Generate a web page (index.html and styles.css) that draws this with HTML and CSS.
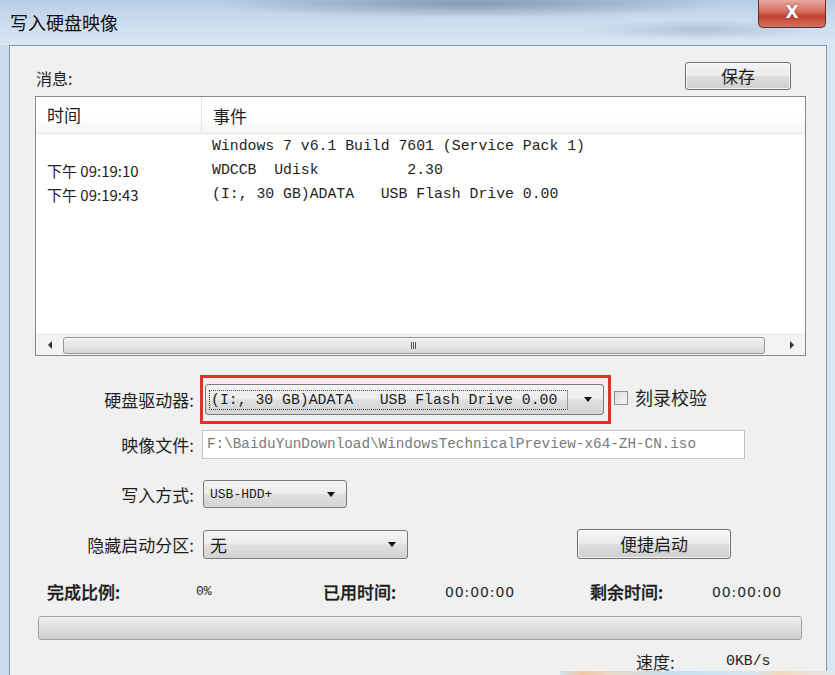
FILE: index.html
```html
<!DOCTYPE html>
<html lang="zh-CN">
<head>
    <meta charset="UTF-8">
    <title>写入硬盘映像</title>
    <link rel="stylesheet" href="styles.css">
</head>
<body>
    <div class="window">
        <div class="titlebar">
            <span class="title">写入硬盘映像</span>
            <span class="close">X</span>
        </div>

        <div class="client">
            <div class="msg-head">
                <span class="msg-label">消息:</span>
                <div class="btn btn-save">保存</div>
            </div>

            <div class="log">
                <div class="log-head">
                    <div class="col-time">时间</div>
                    <div class="col-event">事件</div>
                </div>
                <div class="log-body">
                    <div class="log-row"><div class="col-time"></div><div class="col-event mono">Windows 7 v6.1 Build 7601 (Service Pack 1)</div></div>
                    <div class="log-row"><div class="col-time">下午 09:19:10</div><div class="col-event mono">WDCCB  Udisk          2.30</div></div>
                    <div class="log-row"><div class="col-time">下午 09:19:43</div><div class="col-event mono">(I:, 30 GB)ADATA   USB Flash Drive 0.00</div></div>
                </div>
                <div class="hscroll">
                    <div class="arrow-btn"><span class="tri-left"></span></div>
                    <div class="thumb"><span class="grip"></span></div>
                    <div class="arrow-btn"><span class="tri-right"></span></div>
                </div>
            </div>

            <div class="form">
                <div class="row row-drive">
                    <div class="label">硬盘驱动器:</div>
                    <div class="field">
                        <div class="hilite">
                            <div class="combo combo-drive">
                                <span class="focus mono">(I:, 30 GB)ADATA   USB Flash Drive 0.00</span>
                                <span class="caret"></span>
                            </div>
                        </div>
                        <span class="check"></span>
                        <span class="check-label">刻录校验</span>
                    </div>
                </div>
                <div class="row row-image">
                    <div class="label">映像文件:</div>
                    <div class="field">
                        <div class="textbox mono">F:\BaiduYunDownload\WindowsTechnicalPreview-x64-ZH-CN.iso</div>
                    </div>
                </div>
                <div class="row row-mode">
                    <div class="label">写入方式:</div>
                    <div class="field">
                        <div class="combo combo-mode">
                            <span class="mono small">USB-HDD+</span>
                            <span class="caret"></span>
                        </div>
                    </div>
                </div>
                <div class="row row-hide">
                    <div class="label">隐藏启动分区:</div>
                    <div class="field">
                        <div class="combo combo-hide">
                            <span>无</span>
                            <span class="caret"></span>
                        </div>
                        <div class="btn btn-boot">便捷启动</div>
                    </div>
                </div>
            </div>

            <div class="stats">
                <span class="stat-label">完成比例:</span>
                <span class="mono small">0%</span>
                <span class="stat-label">已用时间:</span>
                <span class="clock">00:00:00</span>
                <span class="stat-label">剩余时间:</span>
                <span class="clock">00:00:00</span>
            </div>

            <div class="progress"></div>

            <div class="speed">
                <span class="speed-label">速度:</span>
                <span class="mono">0KB/s</span>
            </div>
        </div>
        <div class="taskbar-peek"></div>
    </div>
</body>
</html>
```

FILE: styles.css
```css
body {
    margin: 0;
    padding: 0;
    font-family: "Noto Sans CJK SC", sans-serif;
    color: #1e1e1e;
}
.window {
    position: relative;
    width: 835px;
    height: 675px;
    overflow: hidden;
    background: linear-gradient(90deg, #c9dbee 0%, #d8e6f4 100%);
}
.mono {
    font-family: "Liberation Mono", "Noto Sans CJK SC", monospace;
    font-size: 14.8px;
    white-space: pre;
}
.small {
    font-size: 13px;
}

/* title bar */
.titlebar {
    height: 45px;
    display: flex;
    align-items: flex-start;
    background:
        radial-gradient(ellipse 260px 14px at 470px 4px, rgba(70, 90, 115, 0.45), rgba(70, 90, 115, 0) 100%),
        radial-gradient(ellipse 120px 10px at 700px 30px, rgba(90, 110, 135, 0.25), rgba(90, 110, 135, 0) 100%),
        linear-gradient(180deg, #b7cde5 0%, #cadcef 45%, #d9e6f4 100%);
}
.title {
    padding: 9px 0 0 10px;
    font-size: 18px;
    color: #111;
}
.close {
    margin-left: auto;
    margin-right: 9px;
    width: 68px;
    height: 28px;
    box-sizing: border-box;
    border: 1px solid #6b2a24;
    border-top: none;
    border-radius: 0 0 5px 5px;
    background: linear-gradient(180deg, #e9aaa2 0%, #d66a5c 45%, #c1402f 60%, #d3735f 100%);
    color: #fff;
    font-family: "DejaVu Sans", sans-serif;
    font-weight: bold;
    font-size: 17px;
    text-align: center;
    line-height: 24px;
    text-shadow: 0 0 2px #6b2a24;
}

/* client area */
.client {
    margin: 0 8px 0 9px;
    height: 640px;
    border: 1px solid #7f97b0;
    border-bottom: none;
    background: #f0f0f0;
    padding: 0 20px 0 25px;
}
.msg-head {
    height: 47px;
    display: flex;
    align-items: flex-start;
    justify-content: space-between;
}
.msg-label {
    margin: 20px 0 0 1px;
    font-size: 16px;
}
.btn {
    box-sizing: border-box;
    border: 1px solid #707070;
    border-radius: 3px;
    background: linear-gradient(180deg, #f4f4f4 0%, #ebebeb 48%, #dddddd 52%, #cfcfcf 100%);
    box-shadow: inset 0 0 0 1px rgba(255, 255, 255, 0.7);
    text-align: center;
    font-size: 17px;
}
.btn-save {
    margin: 16px 15px 0 0;
    width: 106px;
    height: 28px;
    line-height: 25px;
}

/* log list */
.log {
    margin-top: 3px;
    height: 260px;
    box-sizing: border-box;
    border: 1px solid #828790;
    background: #fff;
    display: flex;
    flex-direction: column;
}
.log-head {
    height: 36px;
    display: flex;
    align-items: center;
    background: linear-gradient(180deg, #ffffff 0%, #ffffff 55%, #f3f4f6 100%);
    border-bottom: 1px solid #e3e4e6;
    font-size: 17px;
}
.log-head .col-time {
    border-right: 1px solid #e3e4e6;
    height: 36px;
    line-height: 36px;
}
.col-time {
    width: 154px;
    padding-left: 11px;
    flex: none;
}
.col-event {
    padding-left: 11px;
}
.log-body {
    flex: 1;
    padding-top: 0;
}
.log-row {
    height: 24px;
    display: flex;
    align-items: center;
    font-size: 15px;
}
.hscroll {
    height: 20px;
    display: flex;
    align-items: center;
    background: #f3f3f3;
    border-top: 1px solid #e8e8e8;
}
.arrow-btn {
    width: 27px;
    height: 20px;
    display: flex;
    align-items: center;
    justify-content: center;
}
.tri-left {
    border-right: 4px solid #333;
    border-top: 4px solid transparent;
    border-bottom: 4px solid transparent;
}
.tri-right {
    border-left: 4px solid #333;
    border-top: 4px solid transparent;
    border-bottom: 4px solid transparent;
}
.thumb {
    flex: 1;
    height: 17px;
    margin-right: 13px;
    box-sizing: border-box;
    border: 1px solid #979797;
    border-radius: 3px;
    background: linear-gradient(180deg, #f4f4f4 0%, #e6e6e6 50%, #d6d6d6 100%);
    display: flex;
    align-items: center;
    justify-content: center;
}
.grip {
    width: 6px;
    height: 7px;
    background: repeating-linear-gradient(90deg, #555 0, #555 1px, transparent 1px, transparent 2px);
}

/* form rows */
.form {
    margin-top: 19px;
}
.row {
    display: grid;
    grid-template-columns: 163px auto;
    align-items: center;
}
.label {
    text-align: right;
    font-size: 17px;
    padding-right: 4px;
}
.field {
    display: flex;
    align-items: center;
}
.row-image {
    margin-top: 6px;
}
.row-mode,
.row-hide {
    margin-top: 21px;
}
.hilite {
    margin-left: 2px;
    border: 3px solid #e2302c;
    padding: 6px 4px 6px 2px;
}
.combo {
    box-sizing: border-box;
    border: 1px solid #7a7a7a;
    border-radius: 3px;
    background: linear-gradient(180deg, #f4f4f4 0%, #ececec 48%, #dfdfdf 52%, #d3d3d3 100%);
    display: flex;
    align-items: center;
    padding-left: 8px;
    padding-right: 11px;
    font-size: 17px;
}
.combo .caret {
    margin-left: auto;
    border-top: 5px solid #111;
    border-left: 4px solid transparent;
    border-right: 4px solid transparent;
}
.combo-drive {
    width: 399px;
    height: 31px;
    padding-left: 3px;
}
.focus {
    border: 1px dotted #444;
    padding: 1px 10px 1px 1px;
    margin-right: 8px;
    border-right: 1px solid #9a9a9a;
}
.check {
    margin-left: 3px;
    width: 14px;
    height: 14px;
    box-sizing: border-box;
    border: 1px solid #8e8f8f;
    background: linear-gradient(135deg, #dcdcdc 0%, #f6f6f6 100%);
    margin-top: -4px;
}
.check-label {
    margin-left: 7px;
    font-size: 18px;
    margin-top: -6px;
}
.textbox {
    margin-left: 4px;
    width: 543px;
    height: 29px;
    box-sizing: border-box;
    border: 1px solid #c2c4c8;
    background: #fff;
    color: #7a7a7a;
    font-size: 14.3px;
    line-height: 27px;
    padding-left: 4px;
}
.combo-mode {
    margin-left: 5px;
    width: 144px;
    height: 28px;
    padding-left: 6px;
}
.combo-hide {
    margin-left: 5px;
    width: 205px;
    height: 29px;
    padding-left: 6px;
}
.btn-boot {
    margin-left: 169px;
    width: 154px;
    height: 30px;
    line-height: 27px;
}

/* progress */
.stats {
    margin-top: 20px;
    height: 24px;
    display: grid;
    grid-template-columns: 149px 127px 122px 145px 122px auto;
    align-items: center;
    padding-left: 12px;
}
.stat-label {
    font-size: 17px;
    font-weight: 500;
    color: #1a1a1a;
    -webkit-text-stroke: 0.3px #1a1a1a;
}
.clock {
    font-family: "DejaVu Sans", sans-serif;
    font-size: 14px;
    letter-spacing: 0.9px;
}
.progress {
    margin: 13px 4px 0 3px;
    height: 24px;
    box-sizing: border-box;
    border: 1px solid #a2a2a2;
    border-radius: 3px;
    background: linear-gradient(180deg, #f0f0f0 0%, #e2e2e2 40%, #cdcdcd 100%);
}
.speed {
    margin-top: 10px;
    height: 22px;
    display: flex;
    align-items: center;
    padding-left: 601px;
}
.speed-label {
    width: 90px;
    font-size: 17px;
}

/* blurred taskbar colours showing under the window's bottom edge */
.taskbar-peek {
    position: absolute;
    left: 560px;
    bottom: 0;
    width: 275px;
    height: 4px;
    background: linear-gradient(90deg, #cfe3f1 0%, #f3c6a0 8%, #e9d9c8 18%, #c6e0ef 40%, #d5e6f1 70%, #f2d9bb 80%, #e2e8ee 100%);
}
```
